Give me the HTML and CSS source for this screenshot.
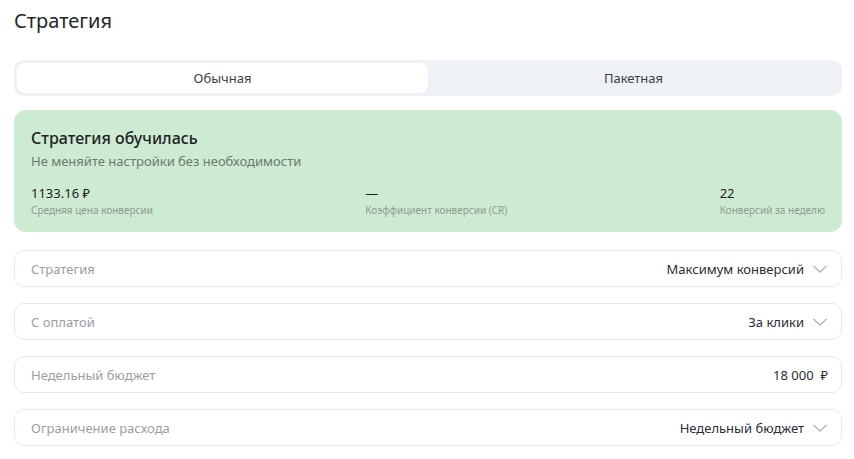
FILE: index.html
```html
<!DOCTYPE html>
<html lang="ru">
<head>
  <meta charset="UTF-8">
  <title>Стратегия</title>
  <link rel="stylesheet" href="styles.css">
</head>
<body>

<div class="panel">
  <h1 class="panel-title">Стратегия</h1>

  <div class="tabs">
    <button class="tab active">Обычная</button>
    <button class="tab">Пакетная</button>
  </div>

  <div class="status-card">
    <div class="status-title">Стратегия обучилась</div>
    <div class="status-sub">Не меняйте настройки без необходимости</div>
    <div class="stats">
      <div class="stat">
        <div class="stat-value">1133.16 ₽</div>
        <div class="stat-label">Средняя цена конверсии</div>
      </div>
      <div class="stat">
        <div class="stat-value">—</div>
        <div class="stat-label">Коэффициент конверсии (CR)</div>
      </div>
      <div class="stat">
        <div class="stat-value">22</div>
        <div class="stat-label">Конверсий за неделю</div>
      </div>
    </div>
  </div>

  <div class="field">
    <span class="field-label">Стратегия</span>
    <span class="field-value">Максимум конверсий
      <svg class="chevron" width="16" height="10" viewBox="0 0 16 10"><path d="M1.5 2l6.5 6 6.5-6" fill="none" stroke="currentColor" stroke-width="1.5"/></svg>
    </span>
  </div>

  <div class="field">
    <span class="field-label">С оплатой</span>
    <span class="field-value">За клики
      <svg class="chevron" width="16" height="10" viewBox="0 0 16 10"><path d="M1.5 2l6.5 6 6.5-6" fill="none" stroke="currentColor" stroke-width="1.5"/></svg>
    </span>
  </div>

  <div class="field">
    <span class="field-label">Недельный бюджет</span>
    <span class="field-value">18 000&nbsp; ₽</span>
  </div>

  <div class="field">
    <span class="field-label">Ограничение расхода</span>
    <span class="field-value">Недельный бюджет
      <svg class="chevron" width="16" height="10" viewBox="0 0 16 10"><path d="M1.5 2l6.5 6 6.5-6" fill="none" stroke="currentColor" stroke-width="1.5"/></svg>
    </span>
  </div>
</div>

</body>
</html>
```

FILE: styles.css
```css
* { margin: 0; padding: 0; box-sizing: border-box; }
body {
  font-family: 'Noto Sans', 'Open Sans', sans-serif;
  background: #fff;
  color: #21252b;
}
.panel {
  padding: 8px 12px 0 14px;
}
.panel-title {
  font-size: 20px;
  font-weight: 400;
  line-height: 26px;
  color: #23272d;
  margin-bottom: 26px;
}
.tabs {
  display: flex;
  background: #eef1f5;
  border-radius: 10px;
  padding: 3px;
  height: 36px;
}
.tab {
  flex: 1;
  border: none;
  background: transparent;
  border-radius: 8px;
  font-family: inherit;
  font-size: 13px;
  color: #3b3f45;
}
.tab.active { background: #fff; }
.status-card {
  background: #cdebd1;
  border-radius: 12px;
  margin-top: 14px;
  padding: 18px 17px 14px;
  height: 122px;
}
.status-title {
  font-size: 16px;
  font-weight: 500;
  line-height: 20px;
  color: #1e2227;
}
.status-sub {
  font-size: 13px;
  line-height: 17px;
  margin-top: 5px;
  color: #6c7870;
}
.stats {
  display: flex;
  justify-content: space-between;
  margin-top: 15px;
}
.stat-value {
  font-size: 13px;
  line-height: 17px;
  color: #1e2227;
}
.stat-label {
  font-size: 10px;
  line-height: 13px;
  margin-top: 2px;
  color: #8d9a91;
}
.field {
  display: flex;
  align-items: center;
  justify-content: space-between;
  height: 37px;
  margin-top: 16px;
  padding: 0 13px 0 16px;
  border: 1px solid #e7e9ec;
  border-radius: 10px;
  font-size: 13px;
}
.status-card + .field { margin-top: 18px; }
.field-label { color: #9a9ea4; }
.field-value {
  display: flex;
  align-items: center;
  gap: 8px;
  color: #2a2e34;
}
.chevron { color: #b3b8be; }
```
